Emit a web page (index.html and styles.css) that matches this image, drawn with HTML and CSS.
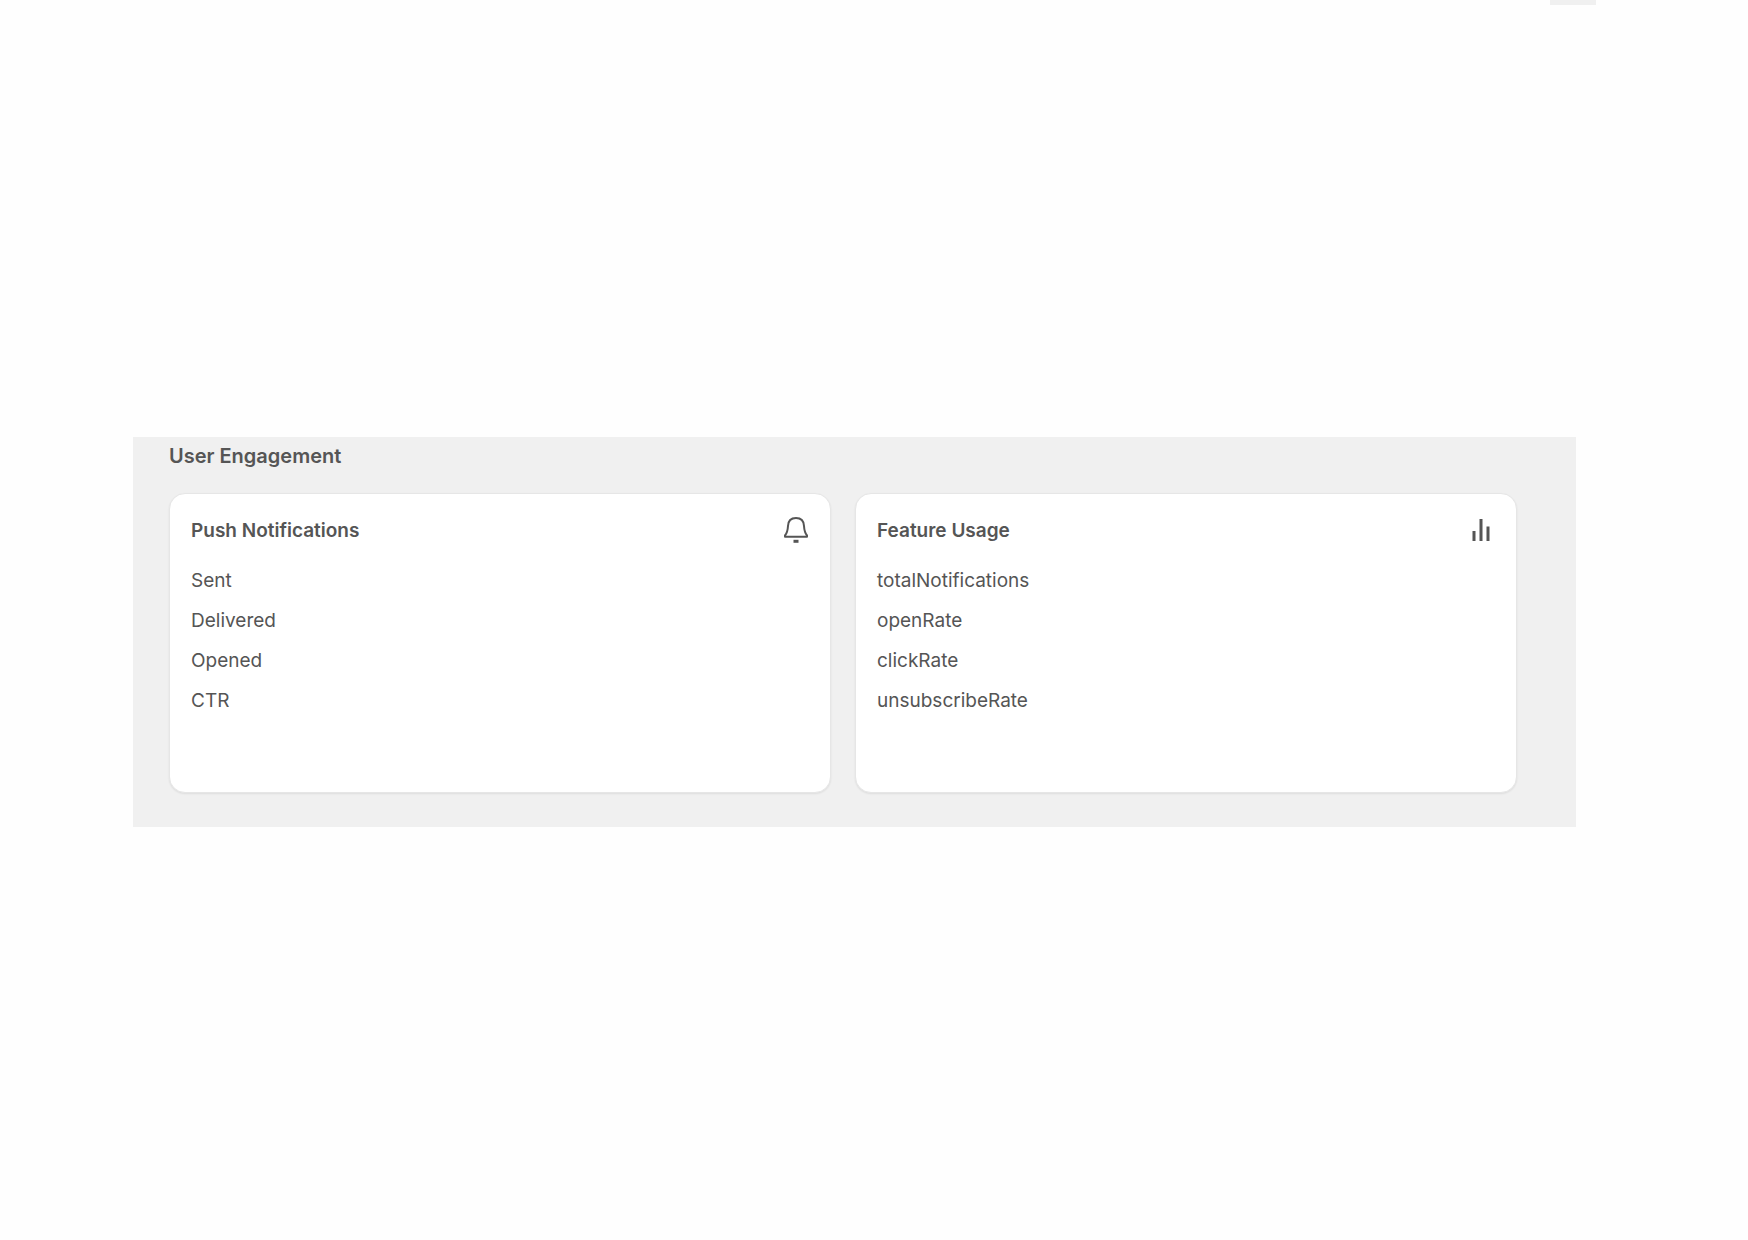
FILE: index.html
```
<!DOCTYPE html>
<html lang="en">
<head>
    <meta charset="UTF-8">
    <meta name="viewport" content="width=device-width, initial-scale=1.0">
    <title>User Engagement</title>
    <link rel="stylesheet" href="styles.css">
</head>
<body>
    <header class="top-bar">
        <div class="top-tab"></div>
    </header>
    <main class="engagement">
        <h1>User Engagement</h1>
        <div class="cards">
            <section class="card">
                <div class="card-header">
                    <h2>Push Notifications</h2>
                    <svg class="icon" viewBox="0 0 28 28" aria-hidden="true">
                        <path d="M3 18.500c1.800-2 2.700-4.500 3-9.500C6.200 4 9 1 14 1s7.800 3 8 8c.3 5 1.200 7.500 3 9.500v1.200H3z"/>
                        <path d="M11.500 24.300h5" stroke-width="3"/>
                    </svg>
                </div>
                <ul class="metrics">
                    <li>Sent</li>
                    <li>Delivered</li>
                    <li>Opened</li>
                    <li>CTR</li>
                </ul>
            </section>
            <section class="card">
                <div class="card-header">
                    <h2>Feature Usage</h2>
                    <svg class="icon icon-bars" viewBox="0 0 28 28" aria-hidden="true">
                        <path d="M6 14v10M13 2v22M20 9.500v14.500"/>
                    </svg>
                </div>
                <ul class="metrics">
                    <li>totalNotifications</li>
                    <li>openRate</li>
                    <li>clickRate</li>
                    <li>unsubscribeRate</li>
                </ul>
            </section>
        </div>
    </main>
</body>
</html>
```

FILE: styles.css
```
* {
    box-sizing: border-box;
}

body {
    font-family: Inter, "Liberation Sans", sans-serif;
    background-color: #fefefe;
    color: #555;
    margin: 0;
}

h1, h2, ul {
    margin: 0;
    padding: 0;
}

.top-bar {
    display: flex;
    justify-content: flex-end;
    padding-right: 152px;
    margin-bottom: 432px;
}

.top-tab {
    width: 46px;
    height: 5px;
    background-color: #f0f0f0;
}

.engagement {
    margin: 0 172px 0 133px;
    padding: 5px 59px 34px 36px;
    background-color: #f0f0f0;
}

h1 {
    font-size: 20px;
    line-height: 28px;
    font-weight: 600;
    margin-bottom: 23px;
}

.cards {
    display: flex;
    gap: 24px;
}

.card {
    flex: 1;
    min-height: 300px;
    padding: 23px 20px 23px 21px;
    background-color: #fff;
    border: 1px solid #e6e6e6;
    border-radius: 16px;
    box-shadow: 0 1px 2px rgba(0, 0, 0, 0.08);
}

.card-header {
    display: flex;
    justify-content: space-between;
    align-items: center;
    margin-bottom: 16px;
}

h2 {
    font-size: 19px;
    line-height: 28px;
    font-weight: 600;
}

.icon {
    width: 28px;
    height: 28px;
    fill: none;
    stroke: #555;
    stroke-width: 2;
    stroke-linejoin: round;
}

.icon-bars {
    stroke-width: 3;
}

.metrics {
    list-style: none;
    font-size: 19px;
    line-height: 40px;
}
```
